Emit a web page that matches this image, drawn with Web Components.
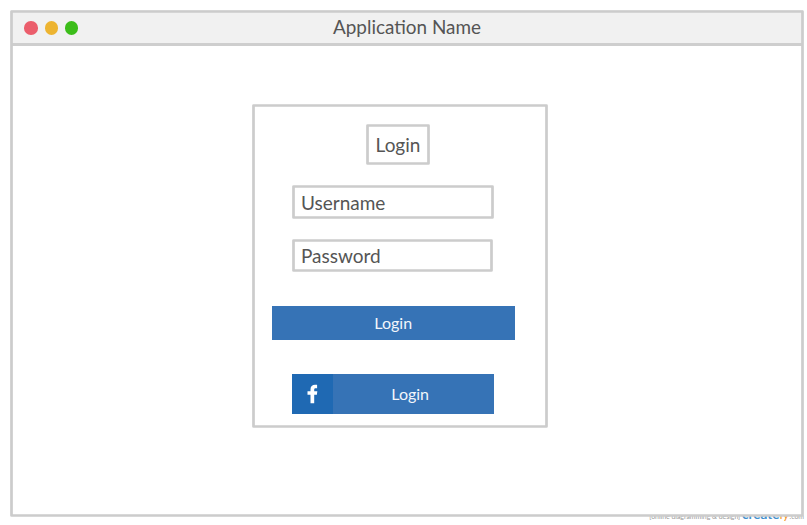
<!DOCTYPE html>
<html lang="en">
<head>
<meta charset="utf-8">
<title>Application Name</title>
<style>
  html, body { margin: 0; background: #fff; overflow: hidden; }
  body { width: 807px; height: 525px; font-family: Lato, Carlito, "Open Sans", sans-serif; color: #555; }
</style>
</head>
<body>
<app-window heading="Application Name">
  <login-card>
    <outline-box class="title">Login</outline-box>
    <outline-box class="user">Username</outline-box>
    <outline-box class="pass">Password</outline-box>
    <action-button class="main">Login</action-button>
    <action-button class="fb" social>Login</action-button>
  </login-card>
</app-window>
<credit-line></credit-line>
<script>
const outline = '<svg class="outline" aria-hidden="true"><rect/></svg>';
const outlineCss = `
  .outline { position: absolute; inset: 0; width: 100%; height: 100%; pointer-events: none; }
  .outline rect { x: 1.5px; y: 1.5px; width: calc(100% - 3px); height: calc(100% - 3px);
    fill: none; stroke: #cccccc; stroke-width: 2.7px; stroke-linejoin: round; }`;

class Base extends HTMLElement {
  constructor() {
    super();
    this.attachShadow({ mode: 'open' }).innerHTML = this.view();
  }
}

customElements.define('app-window', class extends Base {
  view() {
    return `<style>${outlineCss}
      :host { display: flex; flex-direction: column; position: relative; z-index: 1; box-sizing: border-box;
        width: 794px; height: 507px; margin: 10px 0 0 10px; background: linear-gradient(#fff, #fff) 1px 1px / 792px 505px no-repeat; }
      header { display: grid; grid-template-columns: 1fr auto 1fr; align-items: center; box-sizing: border-box;
        height: 36px; margin: 0 1px; background: #f1f1f1; border-bottom: 3px solid #cecece; font-size: 18.9px; line-height: 24px; }
      .dots { display: flex; gap: 6.6px; padding: 3px 0 0 13.4px; }
      i { width: 13.6px; height: 13.6px; border-radius: 50%; background: #eb5e6c; }
      i:nth-child(2) { background: #edb431; }
      i:nth-child(3) { background: #3cbd1a; }
      main { flex: 1; display: flex; padding: 58px 0 0 242px; align-items: flex-start; }
    </style>
    <header><div class="dots"><i></i><i></i><i></i></div><span></span></header>
    <main><slot></slot></main>${outline}`;
  }
  connectedCallback() {
    this.shadowRoot.querySelector('span').textContent = this.getAttribute('heading');
  }
});

customElements.define('login-card', class extends Base {
  view() {
    return `<style>${outlineCss}
      :host { display: flex; flex-direction: column; align-items: flex-start; position: relative; box-sizing: border-box;
        width: 296px; height: 324px; padding-top: 20px; }
      ::slotted(.title) { width: 64px; height: 41px; margin-left: 114px; justify-content: center; }
      ::slotted(.user) { width: 202px; height: 34px; margin: 20px 0 0 40px; }
      ::slotted(.pass) { width: 201px; height: 33px; margin: 20px 0 0 40px; }
      ::slotted(.main) { width: 242.5px; height: 34px; margin: 34px 0 0 20px; }
      ::slotted(.fb) { width: 202px; height: 40.5px; margin: 33.5px 0 0 40.4px; }
    </style><slot></slot>${outline}`;
  }
});

customElements.define('outline-box', class extends Base {
  view() {
    return `<style>${outlineCss}
      :host { display: flex; align-items: center; position: relative; box-sizing: border-box; font-size: 19px; line-height: 24px; }
      span { padding: 0 0 0 9px; }
      :host(.title) span { padding: 0; }
      :host(.user) span { padding-top: 1px; }
    </style><span><slot></slot></span>${outline}`;
  }
});

customElements.define('action-button', class extends Base {
  view() {
    return `<style>
      :host { display: flex; background: #3673b6; color: #f2f6fb; font-size: 16px; line-height: 20px; }
      .icon { display: none; width: 40.5px; background: #1f69b3; }
      :host([social]) .icon { display: block; }
      .label { flex: 1; display: flex; align-items: center; justify-content: center; padding-bottom: 1px; }
      :host([social]) .label { padding: 1px 7px 0 0; }
      svg { display: block; width: 40px; height: 40px; }
    </style>
    <div class="icon"><svg viewBox="0 0 40 40"><path fill="#fff" transform="translate(0.3 -0.7)" d="M18.2 29.9V21.4H15.2V17.9H18.2V16.1C18.2 13.1 20 11.5 22.7 11.5C23.7 11.5 24.6 11.6 24.8 11.6V14.9H23.4C22.1 14.9 21.9 15.5 21.9 16.5V17.9H25L24.6 21.4H21.9V29.9Z"/></svg></div>
    <div class="label"><slot></slot></div>`;
  }
});

customElements.define('credit-line', class extends Base {
  view() {
    return `<style>
      :host { display: flex; position: absolute; right: 3px; top: 506px; align-items: baseline; height: 16px;
        font-size: 6.9px; line-height: 16px; color: #999; white-space: pre; }
      b { font-size: 13.5px; font-weight: 700; color: #3f8fce; }
      em { font-style: normal; font-weight: 400; color: #f79b2e; }
    </style><span>[online diagramming &amp; design] </span><b>create<em>ly</em></b><span>.com</span>`;
  }
});
</script>
</body>
</html>
